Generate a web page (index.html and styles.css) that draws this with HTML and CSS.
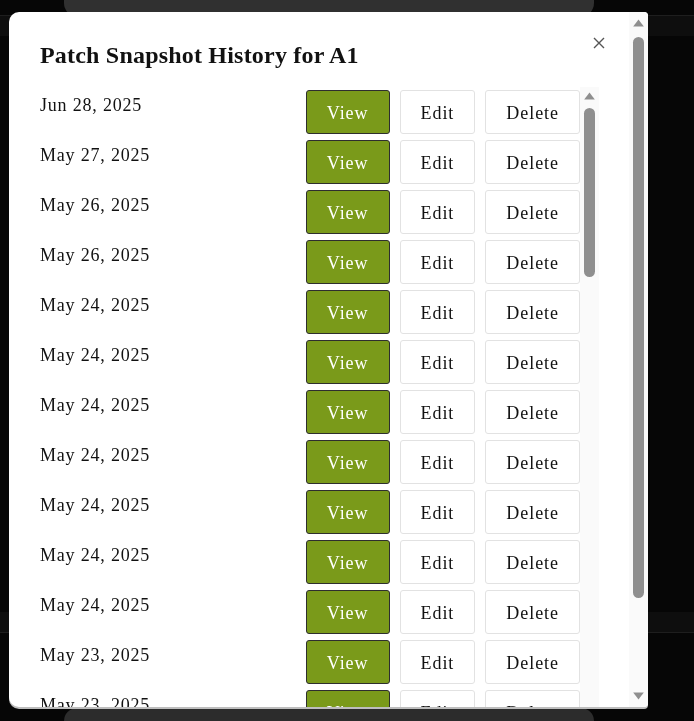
FILE: index.html
```html
<!DOCTYPE html>
<html lang="en">
<head>
<meta charset="utf-8">
<title>Patch Snapshot History</title>
<link rel="stylesheet" href="styles.css">
</head>
<body>
<div class="backdrop">
  <div class="bd-card bd-card-top"></div>
  <div class="bd-stripe bd-stripe-top"></div>
  <div class="bd-gap"></div>
  <div class="bd-stripe bd-stripe-bottom"></div>
  <div class="bd-fill"></div>
  <div class="bd-card bd-card-bottom"></div>
</div>

<div class="overlay">
  <div class="modal">
    <div class="modal-body">
      <div class="modal-header">
        <h2 class="modal-title">Patch Snapshot History for A1</h2>
        <button class="close-btn" aria-label="Close">
          <svg width="12" height="12" viewBox="0 0 12 12"><path d="M1 1L11 11M11 1L1 11" stroke="#555" stroke-width="1.4" fill="none"/></svg>
        </button>
      </div>
      <div class="list-wrap">
        <div class="snapshot-list">
          <div class="row"><span class="date">Jun 28, 2025</span><div class="actions"><button class="btn btn-view">View</button><button class="btn">Edit</button><button class="btn">Delete</button></div></div>
          <div class="row"><span class="date">May 27, 2025</span><div class="actions"><button class="btn btn-view">View</button><button class="btn">Edit</button><button class="btn">Delete</button></div></div>
          <div class="row"><span class="date">May 26, 2025</span><div class="actions"><button class="btn btn-view">View</button><button class="btn">Edit</button><button class="btn">Delete</button></div></div>
          <div class="row"><span class="date">May 26, 2025</span><div class="actions"><button class="btn btn-view">View</button><button class="btn">Edit</button><button class="btn">Delete</button></div></div>
          <div class="row"><span class="date">May 24, 2025</span><div class="actions"><button class="btn btn-view">View</button><button class="btn">Edit</button><button class="btn">Delete</button></div></div>
          <div class="row"><span class="date">May 24, 2025</span><div class="actions"><button class="btn btn-view">View</button><button class="btn">Edit</button><button class="btn">Delete</button></div></div>
          <div class="row"><span class="date">May 24, 2025</span><div class="actions"><button class="btn btn-view">View</button><button class="btn">Edit</button><button class="btn">Delete</button></div></div>
          <div class="row"><span class="date">May 24, 2025</span><div class="actions"><button class="btn btn-view">View</button><button class="btn">Edit</button><button class="btn">Delete</button></div></div>
          <div class="row"><span class="date">May 24, 2025</span><div class="actions"><button class="btn btn-view">View</button><button class="btn">Edit</button><button class="btn">Delete</button></div></div>
          <div class="row"><span class="date">May 24, 2025</span><div class="actions"><button class="btn btn-view">View</button><button class="btn">Edit</button><button class="btn">Delete</button></div></div>
          <div class="row"><span class="date">May 24, 2025</span><div class="actions"><button class="btn btn-view">View</button><button class="btn">Edit</button><button class="btn">Delete</button></div></div>
          <div class="row"><span class="date">May 23, 2025</span><div class="actions"><button class="btn btn-view">View</button><button class="btn">Edit</button><button class="btn">Delete</button></div></div>
          <div class="row"><span class="date">May 23, 2025</span><div class="actions"><button class="btn btn-view">View</button><button class="btn">Edit</button><button class="btn">Delete</button></div></div>
          <div class="row"><span class="date">May 22, 2025</span><div class="actions"><button class="btn btn-view">View</button><button class="btn">Edit</button><button class="btn">Delete</button></div></div>
          <div class="row"><span class="date">May 21, 2025</span><div class="actions"><button class="btn btn-view">View</button><button class="btn">Edit</button><button class="btn">Delete</button></div></div>
          <div class="row"><span class="date">May 21, 2025</span><div class="actions"><button class="btn btn-view">View</button><button class="btn">Edit</button><button class="btn">Delete</button></div></div>
          <div class="row"><span class="date">May 20, 2025</span><div class="actions"><button class="btn btn-view">View</button><button class="btn">Edit</button><button class="btn">Delete</button></div></div>
          <div class="row"><span class="date">May 19, 2025</span><div class="actions"><button class="btn btn-view">View</button><button class="btn">Edit</button><button class="btn">Delete</button></div></div>
          <div class="row"><span class="date">May 18, 2025</span><div class="actions"><button class="btn btn-view">View</button><button class="btn">Edit</button><button class="btn">Delete</button></div></div>
          <div class="row"><span class="date">May 17, 2025</span><div class="actions"><button class="btn btn-view">View</button><button class="btn">Edit</button><button class="btn">Delete</button></div></div>
          <div class="row"><span class="date">May 16, 2025</span><div class="actions"><button class="btn btn-view">View</button><button class="btn">Edit</button><button class="btn">Delete</button></div></div>
          <div class="row"><span class="date">May 16, 2025</span><div class="actions"><button class="btn btn-view">View</button><button class="btn">Edit</button><button class="btn">Delete</button></div></div>
          <div class="row"><span class="date">May 15, 2025</span><div class="actions"><button class="btn btn-view">View</button><button class="btn">Edit</button><button class="btn">Delete</button></div></div>
          <div class="row"><span class="date">May 14, 2025</span><div class="actions"><button class="btn btn-view">View</button><button class="btn">Edit</button><button class="btn">Delete</button></div></div>
          <div class="row"><span class="date">May 13, 2025</span><div class="actions"><button class="btn btn-view">View</button><button class="btn">Edit</button><button class="btn">Delete</button></div></div>
          <div class="row"><span class="date">May 12, 2025</span><div class="actions"><button class="btn btn-view">View</button><button class="btn">Edit</button><button class="btn">Delete</button></div></div>
          <div class="row"><span class="date">May 10, 2025</span><div class="actions"><button class="btn btn-view">View</button><button class="btn">Edit</button><button class="btn">Delete</button></div></div>
          <div class="row"><span class="date">May 9, 2025</span><div class="actions"><button class="btn btn-view">View</button><button class="btn">Edit</button><button class="btn">Delete</button></div></div>
          <div class="row"><span class="date">May 8, 2025</span><div class="actions"><button class="btn btn-view">View</button><button class="btn">Edit</button><button class="btn">Delete</button></div></div>
          <div class="row"><span class="date">May 7, 2025</span><div class="actions"><button class="btn btn-view">View</button><button class="btn">Edit</button><button class="btn">Delete</button></div></div>
          <div class="row"><span class="date">May 6, 2025</span><div class="actions"><button class="btn btn-view">View</button><button class="btn">Edit</button><button class="btn">Delete</button></div></div>
          <div class="row"><span class="date">May 5, 2025</span><div class="actions"><button class="btn btn-view">View</button><button class="btn">Edit</button><button class="btn">Delete</button></div></div>
          <div class="row"><span class="date">May 3, 2025</span><div class="actions"><button class="btn btn-view">View</button><button class="btn">Edit</button><button class="btn">Delete</button></div></div>
          <div class="row"><span class="date">May 2, 2025</span><div class="actions"><button class="btn btn-view">View</button><button class="btn">Edit</button><button class="btn">Delete</button></div></div>
          <div class="row"><span class="date">May 1, 2025</span><div class="actions"><button class="btn btn-view">View</button><button class="btn">Edit</button><button class="btn">Delete</button></div></div>
          <div class="row"><span class="date">Apr 30, 2025</span><div class="actions"><button class="btn btn-view">View</button><button class="btn">Edit</button><button class="btn">Delete</button></div></div>
          <div class="row"><span class="date">Apr 29, 2025</span><div class="actions"><button class="btn btn-view">View</button><button class="btn">Edit</button><button class="btn">Delete</button></div></div>
          <div class="row"><span class="date">Apr 28, 2025</span><div class="actions"><button class="btn btn-view">View</button><button class="btn">Edit</button><button class="btn">Delete</button></div></div>
          <div class="row"><span class="date">Apr 26, 2025</span><div class="actions"><button class="btn btn-view">View</button><button class="btn">Edit</button><button class="btn">Delete</button></div></div>
          <div class="row"><span class="date">Apr 25, 2025</span><div class="actions"><button class="btn btn-view">View</button><button class="btn">Edit</button><button class="btn">Delete</button></div></div>
        </div>
        <div class="vscroll vscroll-inner" aria-hidden="true">
          <div class="vscroll-btn">
            <svg width="11" height="8" viewBox="0 0 11 8"><path d="M5.5 0.6L10.8 7.5H0.2Z" fill="#8f8f8f"/></svg>
          </div>
          <div class="vscroll-track"><div class="vscroll-thumb"></div></div>
        </div>
      </div>
    </div>
    <div class="vscroll vscroll-modal" aria-hidden="true">
      <div class="vscroll-btn vscroll-up">
        <svg width="11" height="8" viewBox="0 0 11 8"><path d="M5.5 0.6L10.8 7.5H0.2Z" fill="#8f8f8f"/></svg>
      </div>
      <div class="vscroll-track"><div class="vscroll-thumb"></div></div>
      <div class="vscroll-btn vscroll-down">
        <svg width="11" height="8" viewBox="0 0 11 8"><path d="M0.2 0.5H10.8L5.5 7.4Z" fill="#8f8f8f"/></svg>
      </div>
    </div>
  </div>
</div>
</body>
</html>
```

FILE: styles.css
```css
html, body {
  margin: 0;
  padding: 0;
  height: 100%;
  overflow: hidden;
}
body {
  background: #060606;
  font-family: "Liberation Serif", serif;
  color: #111;
}

/* dimmed page behind the modal */
.backdrop {
  height: 721px;
  display: flex;
  flex-direction: column;
}
.bd-card {
  flex: none;
  margin-left: 64px;
  width: 530px;
  background: #303030;
}
.bd-card-top {
  height: 17px;
  border-radius: 0 0 14px 14px;
}
.bd-card-bottom {
  height: 13px;
  border-radius: 14px 14px 0 0;
  background: #2c2c2c;
}
.bd-stripe {
  flex: none;
  height: 20px;
  background: #0e0e0e;
}
.bd-stripe-top {
  margin-top: -2px;
  border-top: 1px solid #1e1e1e;
}
.bd-stripe-bottom {
  border-bottom: 1px solid #1e1e1e;
}
.bd-gap {
  flex: none;
  height: 576px;
}
.bd-fill {
  flex: 1;
}

/* modal */
.overlay {
  position: fixed;
  inset: 0;
}
.modal {
  display: flex;
  margin: 12px 0 0 9px;
  width: 639px;
  height: 695px;
  background: #fff;
  border-radius: 10px 4px 4px 10px;
  box-shadow: 0 2px 0 #bdbdbd;
  overflow: hidden;
}
.modal-body {
  flex: 1;
  min-width: 0;
  overflow: hidden;
  padding: 28px 30px 8px 31px;
}
.modal-header {
  display: flex;
  justify-content: space-between;
  align-items: flex-start;
}
.modal-title {
  margin: 0;
  font-size: 24px;
  line-height: 30px;
  font-weight: bold;
  letter-spacing: 0.2px;
  color: #111;
}
.close-btn {
  display: flex;
  margin: -3px -6px 0 0;
  padding: 0;
  border: 0;
  background: none;
  width: 12px;
  height: 12px;
}

/* list */
.list-wrap {
  display: flex;
  margin-top: 17px;
  height: 721px;
}
.snapshot-list {
  flex: 1;
  min-width: 0;
  overflow: hidden;
}
.row {
  display: flex;
  align-items: flex-start;
  justify-content: space-between;
  padding: 3px 0;
}
.date {
  padding-top: 4px;
  font-size: 18px;
  line-height: 22px;
  letter-spacing: 0.8px;
  color: #111;
}
.actions {
  display: flex;
  gap: 10px;
}
.btn {
  font-family: "Liberation Serif", serif;
  font-size: 18px;
  line-height: 22px;
  letter-spacing: 0.95px;
  padding: 11px 20px 9px;
  border: 1px solid #e2e2e2;
  border-radius: 3px;
  background: #fff;
  color: #111;
}
.btn-view {
  background: #7a9a1a;
  border-color: #2e2e2e;
  color: #fff;
}

/* scrollbars */
.vscroll {
  flex: none;
  width: 19px;
  display: flex;
  flex-direction: column;
  background: #fafafa;
}
.vscroll-btn {
  flex: none;
  display: flex;
  justify-content: center;
  align-items: flex-start;
}
.vscroll-track {
  flex: 1;
  display: flex;
  flex-direction: column;
}
.vscroll-thumb {
  margin: 0 4px;
  background: #8f8f8f;
  border-radius: 6px;
}
.vscroll-modal .vscroll-up {
  height: 25px;
  box-sizing: border-box;
  padding-top: 7px;
}
.vscroll-modal .vscroll-down {
  height: 25px;
  box-sizing: border-box;
  padding-top: 10px;
}
.vscroll-modal .vscroll-thumb {
  height: 561px;
}
.vscroll-inner .vscroll-btn {
  height: 21px;
  box-sizing: border-box;
  padding-top: 5px;
}
.vscroll-inner .vscroll-thumb {
  height: 169px;
}
```
